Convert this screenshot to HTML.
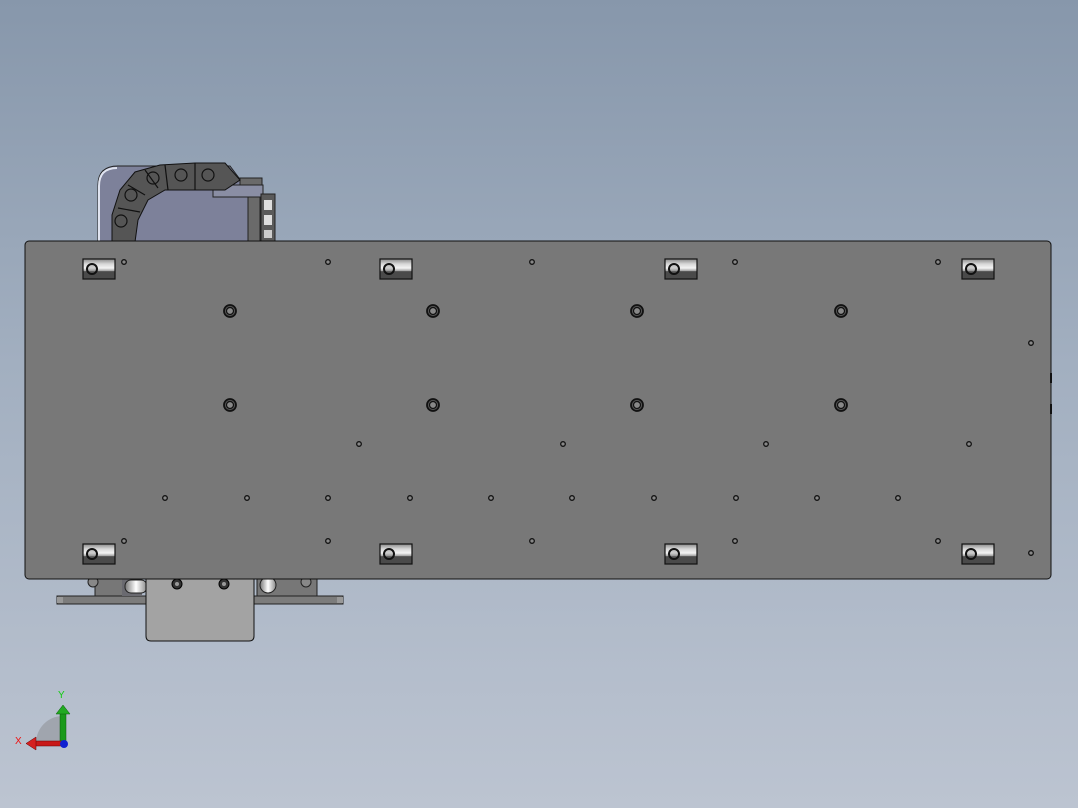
<!DOCTYPE html>
<html><head><style>
html,body{margin:0;padding:0;width:1078px;height:808px;overflow:hidden}
body{background:linear-gradient(#8797ab 0%,#a2afc0 45%,#bcc4d1 100%)}
svg{position:absolute;left:0;top:0}
</style></head><body>
<svg width="1078" height="808" viewBox="0 0 1078 808" xmlns="http://www.w3.org/2000/svg">
<defs>
<linearGradient id="slot" x1="0" y1="0" x2="0" y2="1">
<stop offset="0" stop-color="#8a8a8a"/><stop offset="0.25" stop-color="#d8d8d8"/><stop offset="0.45" stop-color="#f4f4f4"/><stop offset="0.6" stop-color="#a0a0a0"/><stop offset="0.62" stop-color="#4a4a4a"/><stop offset="1" stop-color="#4a4a4a"/>
</linearGradient>
<linearGradient id="cyl" x1="0" y1="0" x2="1" y2="0">
<stop offset="0" stop-color="#777"/><stop offset="0.5" stop-color="#fff"/><stop offset="1" stop-color="#888"/>
</linearGradient>
<g id="sl"><rect x="0" y="0" width="32" height="20" fill="url(#slot)" stroke="#111" stroke-width="1.2"/><circle cx="9" cy="10" r="5" fill="#777" fill-opacity="0.3" stroke="#111" stroke-width="2"/></g>
<g id="scr"><circle r="6" fill="#555" stroke="#111" stroke-width="1.8"/><circle r="3.5" fill="#888" stroke="#111" stroke-width="1.2"/></g>
<g id="h"><circle r="2.3" fill="#888" stroke="#111" stroke-width="1.3"/></g>
</defs>

<path d="M98,242 V185 Q98,166 118,166 H230 L248,190 V242 Z" fill="#7d819a" stroke="#222" stroke-width="1"/>
<path d="M99,242 V186 Q99,168 117,168" fill="none" stroke="#e0e4f0" stroke-width="2"/>
<rect x="248" y="196" width="12" height="46" fill="#6a6a6a" stroke="#222"/>
<rect x="213" y="185" width="50" height="12" fill="#8a8ea4" stroke="#222"/>
<rect x="240" y="178" width="22" height="7" fill="#6a6a6a" stroke="#222"/>
<rect x="261" y="194" width="14" height="48" fill="#5a5a5a" stroke="#222"/>
<rect x="264" y="200" width="8" height="10" fill="#ddd"/><rect x="264" y="215" width="8" height="10" fill="#ddd"/><rect x="264" y="230" width="8" height="8" fill="#ccc"/>
<g fill="#555" stroke="#111" stroke-width="1">
<path d="M112,242 L112,215 L120,190 L135,172 L160,165 L195,163 L225,163 L240,180 L225,190 L195,190 L165,190 L148,200 L138,220 L135,242 Z"/>
</g>
<g fill="none" stroke="#111" stroke-width="1.2">
<circle cx="121" cy="221" r="6"/><circle cx="131" cy="195" r="6"/><circle cx="153" cy="178" r="6"/><circle cx="181" cy="175" r="6"/><circle cx="208" cy="175" r="6"/>
<line x1="118" y1="208" x2="140" y2="212"/><line x1="128" y1="185" x2="145" y2="195"/><line x1="145" y1="170" x2="158" y2="188"/><line x1="165" y1="165" x2="168" y2="190"/><line x1="195" y1="163" x2="195" y2="190"/>
</g>

<rect x="57" y="596" width="286" height="8" fill="#7c7c7c" stroke="#222"/>
<rect x="57" y="597" width="6" height="6" fill="#999"/><rect x="337" y="597" width="6" height="6" fill="#999"/>
<rect x="95" y="578" width="30" height="18" fill="#777" stroke="#222"/>
<rect x="122" y="578" width="20" height="18" fill="#6a6a70"/>
<rect x="125" y="580" width="22" height="13" rx="6" fill="url(#cyl)" stroke="#222"/>
<circle cx="93" cy="582" r="5" fill="#888" stroke="#222"/>
<rect x="257" y="578" width="60" height="18" fill="#777" stroke="#222"/>
<circle cx="268" cy="585" r="8" fill="url(#cyl)" stroke="#222"/>
<circle cx="306" cy="582" r="5" fill="#888" stroke="#222"/>
<path d="M146,579 V636 Q146,641 151,641 H249 Q254,641 254,636 V579 Z" fill="#a3a3a3" stroke="#111" stroke-width="1"/>
<g transform="translate(177,584)"><circle r="5" fill="#333" stroke="#000"/><circle r="2" fill="#999"/></g>
<g transform="translate(224,584)"><circle r="5" fill="#333" stroke="#000"/><circle r="2" fill="#999"/></g>

<rect x="25" y="241" width="1026" height="338" rx="4" fill="#787878" stroke="#111" stroke-width="1"/>
<rect x="1050" y="373" width="2" height="10" fill="#111"/><rect x="1050" y="404" width="2" height="10" fill="#111"/>

<use href="#sl" x="83" y="259"/><use href="#sl" x="380" y="259"/><use href="#sl" x="665" y="259"/><use href="#sl" x="962" y="259"/>
<use href="#sl" x="83" y="544"/><use href="#sl" x="380" y="544"/><use href="#sl" x="665" y="544"/><use href="#sl" x="962" y="544"/>

<g>
<use href="#h" x="124" y="262"/><use href="#h" x="328" y="262"/><use href="#h" x="532" y="262"/><use href="#h" x="735" y="262"/><use href="#h" x="938" y="262"/>
<use href="#h" x="124" y="541"/><use href="#h" x="328" y="541"/><use href="#h" x="532" y="541"/><use href="#h" x="735" y="541"/><use href="#h" x="938" y="541"/>
<use href="#h" x="359" y="444"/><use href="#h" x="563" y="444"/><use href="#h" x="766" y="444"/><use href="#h" x="969" y="444"/>
<use href="#h" x="165" y="498"/><use href="#h" x="247" y="498"/><use href="#h" x="328" y="498"/><use href="#h" x="410" y="498"/><use href="#h" x="491" y="498"/><use href="#h" x="572" y="498"/><use href="#h" x="654" y="498"/><use href="#h" x="736" y="498"/><use href="#h" x="817" y="498"/><use href="#h" x="898" y="498"/>
<use href="#h" x="1031" y="343"/><use href="#h" x="1031" y="553"/>
</g>
<use href="#scr" x="230" y="311"/><use href="#scr" x="433" y="311"/><use href="#scr" x="637" y="311"/><use href="#scr" x="841" y="311"/>
<use href="#scr" x="230" y="405"/><use href="#scr" x="433" y="405"/><use href="#scr" x="637" y="405"/><use href="#scr" x="841" y="405"/>

<path d="M63,743 L36,743 A27,27 0 0 1 63,716 Z" fill="#9a9ea6" opacity="0.8"/>
<rect x="60" y="712" width="6" height="31" fill="#1a9a1a" stroke="#0a5a0a" stroke-width="0.5"/>
<path d="M56,714 L63,705 L70,714 Z" fill="#22aa22" stroke="#0a5a0a" stroke-width="0.5"/>
<rect x="34" y="741" width="29" height="5" fill="#c81818" stroke="#600" stroke-width="0.5"/>
<path d="M36,737 L26,743.5 L36,750 Z" fill="#d42020" stroke="#600" stroke-width="0.5"/>
<circle cx="64" cy="744" r="4" fill="#1020d0"/>
<text x="58" y="698" font-family="Liberation Sans, sans-serif" font-size="10" fill="#11cc11">Y</text>
<text x="15" y="744" font-family="Liberation Sans, sans-serif" font-size="10" fill="#ee1111">X</text>
</svg>
</body></html>
